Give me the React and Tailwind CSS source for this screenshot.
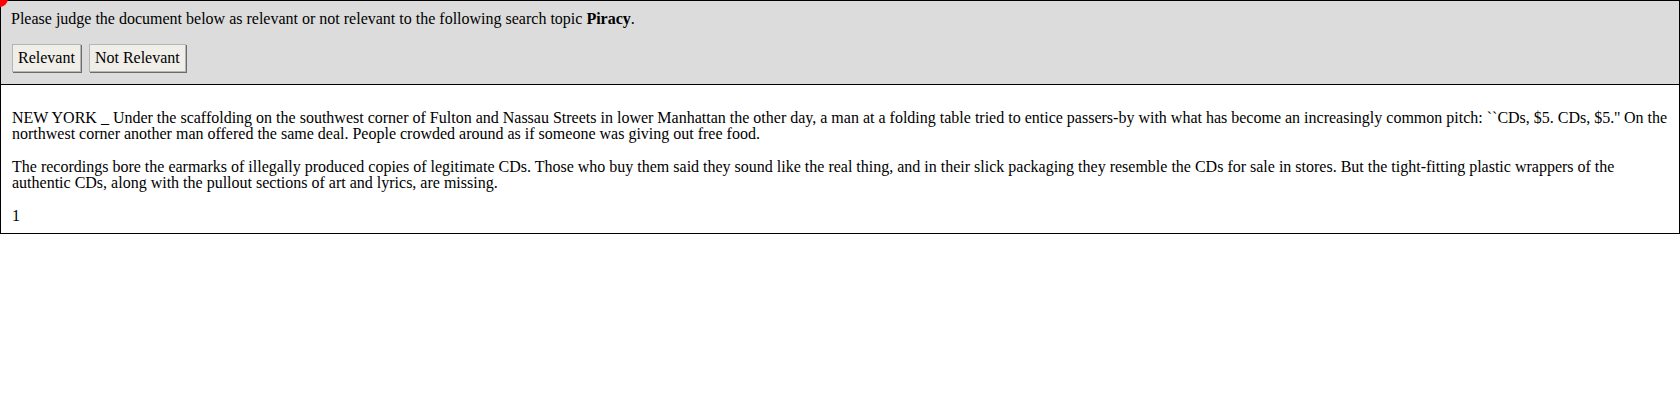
export default function App() {
  return (
    <div className="relative font-['Liberation_Serif',serif] text-[16px] leading-[16px] text-black">
      {/* cursor marker */}
      <div className="absolute -left-[9px] -top-[10px] w-[17px] h-[17px] rounded-full bg-[#f00]" />

      {/* Judge bar */}
      <div className="border border-black bg-[#dcdcdc] px-[10px] pt-[10px] pb-[12px]">
        <p>
          Please judge the document below as relevant or not relevant to the following search topic{" "}
          <b>Piracy</b>.
        </p>
        <div className="flex gap-[8px] mt-[17px] pl-[1px]">
          <button className="h-[28px] px-[5px] bg-[#f0eee9] border border-[#b5b5b5] shadow-[1px_1px_0_#6b6b6b]">
            Relevant
          </button>
          <button className="h-[28px] px-[5px] bg-[#f0eee9] border border-[#b5b5b5] shadow-[1px_1px_0_#6b6b6b]">
            Not Relevant
          </button>
        </div>
      </div>

      {/* Document */}
      <div className="border border-t-0 border-black bg-white px-[11px] pt-[25px] pb-[9px] space-y-[17px]">
        <p>
          NEW YORK _ Under the scaffolding on the southwest corner of Fulton and Nassau Streets in lower Manhattan the other day, a man at a folding table tried to entice passers-by with what has become an increasingly common pitch: ``CDs, $5. CDs, $5.'' On the northwest corner another man offered the same deal. People crowded around as if someone was giving out free food.
        </p>
        <p>
          The recordings bore the earmarks of illegally produced copies of legitimate CDs. Those who buy them said they sound like the real thing, and in their slick packaging they resemble the CDs for sale in stores. But the tight-fitting plastic wrappers of the authentic CDs, along with the pullout sections of art and lyrics, are missing.
        </p>
        <p>1</p>
      </div>
    </div>
  );
}
